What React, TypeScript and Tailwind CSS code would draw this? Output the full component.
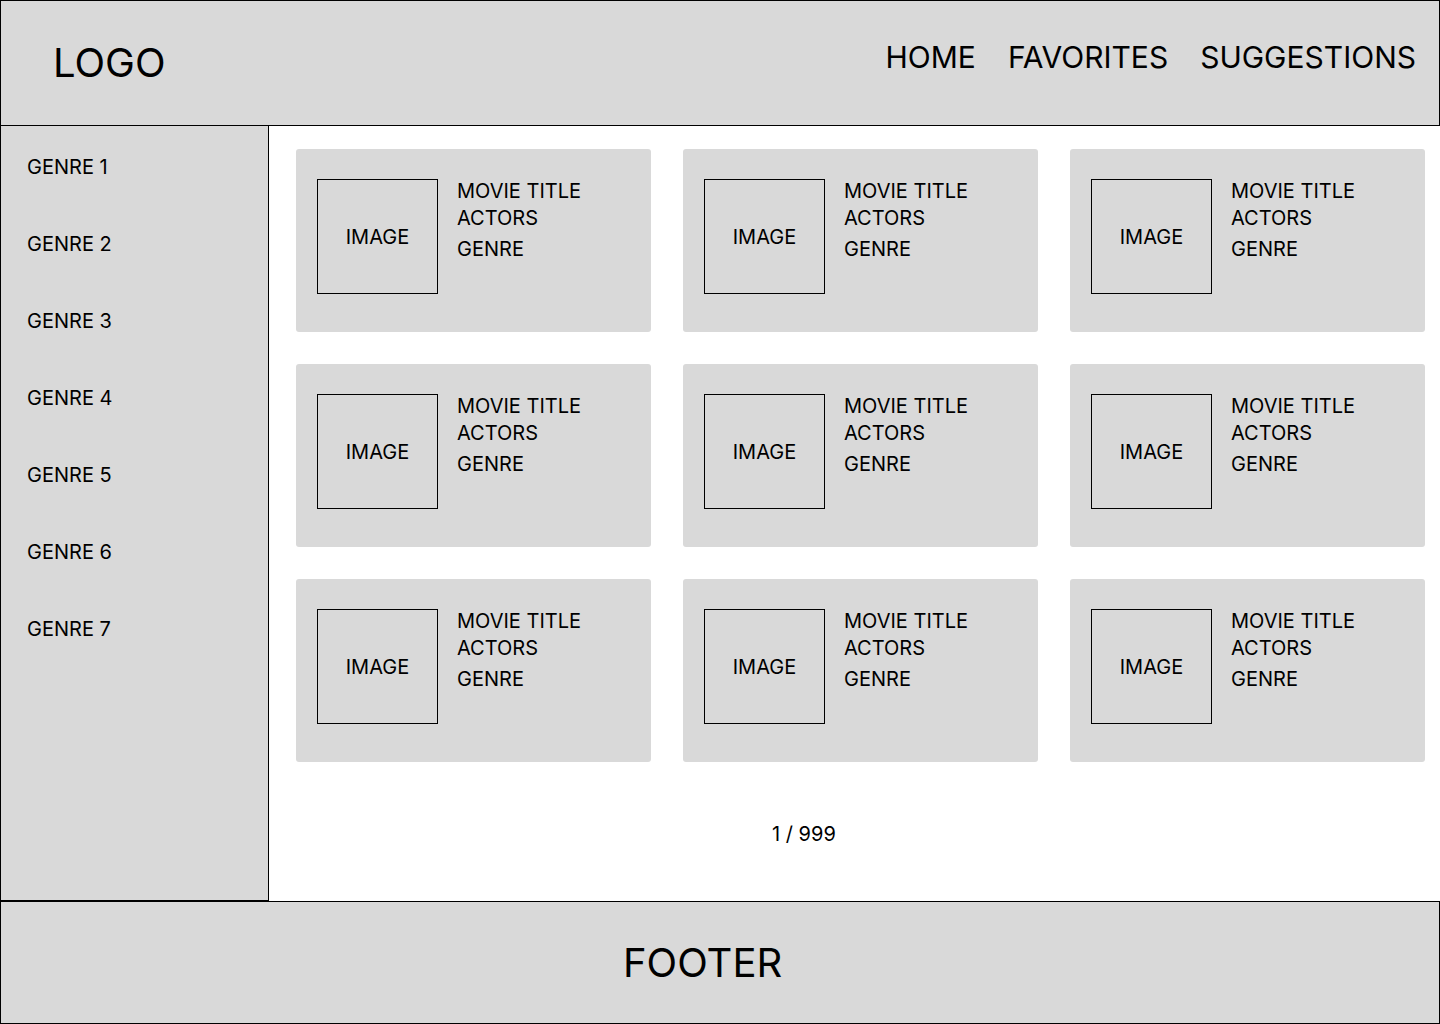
const genres = ["GENRE 1", "GENRE 2", "GENRE 3", "GENRE 4", "GENRE 5", "GENRE 6", "GENRE 7"];
const navLinks = ["HOME", "FAVORITES", "SUGGESTIONS"];
const movies = Array.from({ length: 9 }, (_, i) => i);

const MovieCard = () => {
  return (
    <div className="h-[183px] rounded-[3px] bg-[#d9d9d9] pl-[21px] pt-[30px] flex items-start gap-[19px]">
      <div className="w-[121px] h-[115px] border border-black flex items-center justify-center text-[20px] leading-[24px]">
        IMAGE
      </div>
      <div className="flex flex-col text-[20px] leading-[24px]">
        <p>MOVIE TITLE</p>
        <p className="mt-[3px]">ACTORS</p>
        <p className="mt-[7px]">GENRE</p>
      </div>
    </div>
  );
};

export default function App() {
  return (
    <div className="w-[1440px] h-[1024px] flex flex-col bg-white text-black font-['Inter','Liberation_Sans',sans-serif]">
      <header className="h-[126px] shrink-0 border border-black bg-[#d9d9d9] flex items-center justify-between pl-[52px] pr-[23px]">
        <span className="text-[40px] leading-[48px]">LOGO</span>
        <nav className="flex gap-[32px] mb-[12px]">
          {navLinks.map((link) => (
            <a key={link} className="text-[30px] leading-[36px]">
              {link}
            </a>
          ))}
        </nav>
      </header>

      <div className="flex h-[775px] shrink-0">
        <aside className="w-[269px] shrink-0 border-x border-b border-black bg-[#d9d9d9] pl-[26px] pt-[29px] flex flex-col gap-[53px]">
          {genres.map((genre) => (
            <p key={genre} className="text-[20px] leading-[24px]">
              {genre}
            </p>
          ))}
        </aside>

        <main className="flex-1 pl-[27px] pt-[23px]">
          <div className="grid grid-cols-[355px_355px_355px] gap-[32px]">
            {movies.map((m) => (
              <MovieCard key={m} />
            ))}
          </div>
          <p className="mt-[60px] ml-[476px] text-[20px] leading-[24px]">1 / 999</p>
        </main>
      </div>

      <footer className="h-[123px] shrink-0 border border-black bg-[#d9d9d9] flex items-center pl-[622px]">
        <span className="text-[40px] leading-[48px]">FOOTER</span>
      </footer>
    </div>
  );
}
